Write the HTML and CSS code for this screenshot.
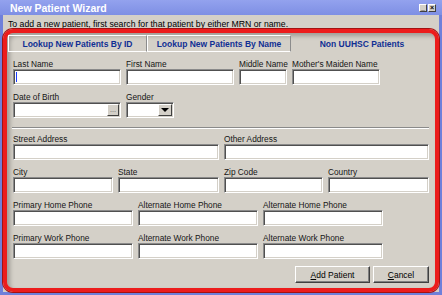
FILE: index.html
```html
<!DOCTYPE html>
<html lang="en">
<head>
    <meta charset="UTF-8">
    <title>New Patient Wizard</title>
    <link rel="stylesheet" href="styles.css">
</head>
<body>
    <div class="window">
        <div class="titlebar">
            <span class="title">New Patient Wizard</span>
            <div class="controls">
                <span class="ctl">_</span>
                <span class="ctl">×</span>
            </div>
        </div>
        <div class="body">
            <p class="hint">To add a new patient, first search for that patient by either MRN or name.</p>
            <div class="frame">
                <div class="tabs">
                    <div class="tab raised tab-id">Lookup New Patients By ID</div>
                    <div class="tab raised tab-name">Lookup New Patients By Name</div>
                    <div class="tab tab-other">Non UUHSC Patients</div>
                </div>
                <div class="panel">
                    <div class="row">
                        <div class="field w108">
                            <label>Last Name</label>
                            <div class="input"><span class="caret"></span></div>
                        </div>
                        <div class="field w108">
                            <label>First Name</label>
                            <div class="input"></div>
                        </div>
                        <div class="field w48">
                            <label>Middle Name</label>
                            <div class="input"></div>
                        </div>
                        <div class="field w88">
                            <label>Mother's Maiden Name</label>
                            <div class="input"></div>
                        </div>
                    </div>
                    <div class="row">
                        <div class="field w108">
                            <label>Date of Birth</label>
                            <div class="input picker"><span class="btn-mini">...</span></div>
                        </div>
                        <div class="field w48">
                            <label>Gender</label>
                            <div class="input picker"><span class="btn-mini drop"><span class="arrow"></span></span></div>
                        </div>
                    </div>
                    <div class="sep"></div>
                    <div class="row">
                        <div class="field w206">
                            <label>Street Address</label>
                            <div class="input"></div>
                        </div>
                        <div class="field w205">
                            <label>Other Address</label>
                            <div class="input"></div>
                        </div>
                    </div>
                    <div class="row">
                        <div class="field w100">
                            <label>City</label>
                            <div class="input"></div>
                        </div>
                        <div class="field w101">
                            <label>State</label>
                            <div class="input"></div>
                        </div>
                        <div class="field w99">
                            <label>Zip Code</label>
                            <div class="input"></div>
                        </div>
                        <div class="field w101">
                            <label>Country</label>
                            <div class="input"></div>
                        </div>
                    </div>
                    <div class="row">
                        <div class="field w120">
                            <label>Primary Home Phone</label>
                            <div class="input"></div>
                        </div>
                        <div class="field w120">
                            <label>Alternate Home Phone</label>
                            <div class="input"></div>
                        </div>
                        <div class="field w120">
                            <label>Alternate Home Phone</label>
                            <div class="input"></div>
                        </div>
                    </div>
                    <div class="row">
                        <div class="field w120">
                            <label>Primary Work Phone</label>
                            <div class="input"></div>
                        </div>
                        <div class="field w120">
                            <label>Alternate Work Phone</label>
                            <div class="input"></div>
                        </div>
                        <div class="field w120">
                            <label>Alternate Work Phone</label>
                            <div class="input"></div>
                        </div>
                    </div>
                    <div class="actions">
                        <button type="button" class="button add"><u>A</u>dd Patient</button>
                        <button type="button" class="button cancel"><u>C</u>ancel</button>
                    </div>
                </div>
            </div>
        </div>
    </div>
</body>
</html>
```

FILE: styles.css
```css
/* page */
body {
    margin: 0;
    background-color: #d4d0c8;
    font-family: "Liberation Sans", Arial, sans-serif;
    font-size: 8.3px;
    color: #151515;
}

/* window frame */
.window {
    width: 442px;
    height: 295px;
    display: flex;
    flex-direction: column;
    background-color: #6f80da;
}

.titlebar {
    height: 15px;
    display: flex;
    align-items: center;
    justify-content: space-between;
    padding: 0 6px 0 10px;
    background: linear-gradient(#93a2ee, #7e8fe4);
    color: #fff;
    font-weight: bold;
    font-size: 10.5px;
}

.controls {
    display: flex;
    gap: 1px;
}

.ctl {
    width: 8px;
    height: 8px;
    box-sizing: border-box;
    display: flex;
    align-items: center;
    justify-content: center;
    background-color: #d4d0c8;
    border: 1px solid;
    border-color: #fff #404040 #404040 #fff;
    color: #000;
    font-size: 7px;
    line-height: 6px;
    font-weight: bold;
}

.body {
    flex: 1;
    margin: 0 3px 3px;
    background-color: #d4d0c8;
    display: flex;
    flex-direction: column;
}

.hint {
    margin: 0;
    padding: 4px 0 0 5px;
    line-height: 10px;
    font-size: 8.7px;
    color: #000;
}

/* red outline round the tab control */
.frame {
    flex: 1;
    border: 4px solid #ec1c1c;
    border-radius: 10px;
    box-shadow: inset 3px 3px 4px rgba(0, 0, 0, 0.25), 0 0 0 1px #a31212;
    display: flex;
    flex-direction: column;
}

/* tabs */
.tabs {
    display: flex;
    height: 17px;
    margin: 2px 2px 0 1px;
}

.tab {
    box-sizing: border-box;
    display: flex;
    align-items: center;
    justify-content: center;
    font-weight: bold;
    font-size: 8.5px;
    color: #102f94;
}

.tab.raised {
    border: 1px solid;
    border-color: #fff #8c8c8c #fff #fff;
}

.tab-id {
    width: 139px;
}

.tab-name {
    width: 144px;
}

.tab-other {
    flex: 1;
}

/* form */
.panel {
    display: flex;
    flex-direction: column;
    padding: 7px 6px 0 6px;
}

.row {
    display: flex;
    gap: 5px;
    margin-bottom: 7px;
}

.field {
    display: flex;
    flex-direction: column;
}

label {
    line-height: 10px;
    white-space: nowrap;
}

.input {
    height: 16px;
    box-sizing: border-box;
    background-color: #fff;
    border: 1px solid;
    border-color: #8a8a8a #fff #fff #8a8a8a;
    box-shadow: inset 1px 1px 0 #505050, inset -1px -1px 0 #d4d0c8;
    display: flex;
    align-items: center;
}

.caret {
    width: 1px;
    height: 10px;
    margin-left: 2px;
    background-color: #1a3cff;
}

.picker {
    justify-content: flex-end;
    padding: 1px;
}

.btn-mini {
    width: 12px;
    height: 12px;
    box-sizing: border-box;
    display: flex;
    align-items: center;
    justify-content: center;
    background-color: #d4d0c8;
    border: 1px solid;
    border-color: #fff #404040 #404040 #fff;
    color: #555;
    font-size: 7px;
    line-height: 6px;
}

.btn-mini.drop {
    width: 14px;
}

.arrow {
    width: 0;
    height: 0;
    border-left: 4px solid transparent;
    border-right: 4px solid transparent;
    border-top: 4px solid #000;
}

.w48 { width: 48px; }
.w88 { width: 88px; }
.w99 { width: 99px; }
.w100 { width: 100px; }
.w101 { width: 101px; }
.w108 { width: 108px; }
.w120 { width: 120px; }
.w205 { width: 205px; }
.w206 { width: 206px; }

.sep {
    height: 0;
    margin: 2px 0 5px -1px;
    width: 417px;
    border-top: 1px solid #8a8a8a;
    border-bottom: 1px solid #fff;
}

/* buttons */
.actions {
    display: flex;
    justify-content: flex-end;
    gap: 3px;
}

.button {
    height: 17px;
    padding: 0;
    box-sizing: border-box;
    background-color: #d4d0c8;
    border: 1px solid;
    border-color: #fff #404040 #404040 #fff;
    box-shadow: inset -1px -1px 0 #808080;
    font-family: "Liberation Sans", Arial, sans-serif;
    font-size: 8.5px;
    color: #000;
}

.add {
    width: 75px;
}

.cancel {
    width: 56px;
}
```
